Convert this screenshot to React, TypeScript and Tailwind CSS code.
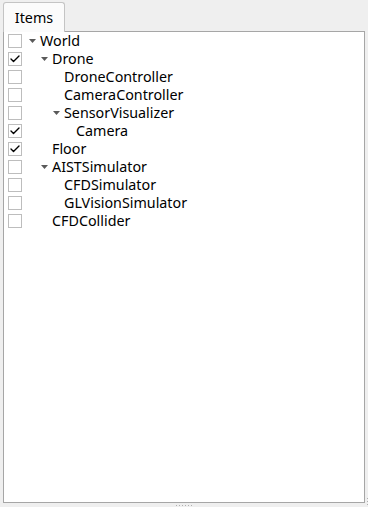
import { Check } from 'lucide-react';

type Item = { name: string; level: number; checked?: boolean; open?: boolean };

const items: Item[] = [
  { name: 'World', level: 0, open: true },
  { name: 'Drone', level: 1, checked: true, open: true },
  { name: 'DroneController', level: 2 },
  { name: 'CameraController', level: 2 },
  { name: 'SensorVisualizer', level: 2, open: true },
  { name: 'Camera', level: 3, checked: true },
  { name: 'Floor', level: 1, checked: true },
  { name: 'AISTSimulator', level: 1, open: true },
  { name: 'CFDSimulator', level: 2 },
  { name: 'GLVisionSimulator', level: 2 },
  { name: 'CFDCollider', level: 1 },
];

const pads = ['pl-[7px]', 'pl-[19px]', 'pl-[31px]', 'pl-[43px]'];

const Row = ({ item }: { item: Item }) => (
  <div className="flex items-center h-[18px]">
    <div className="ml-[4px] w-[14px] h-[14px] border border-[#bdbdbd] bg-white flex items-center justify-center">
      {item.checked && <Check className="w-[12px] h-[12px] text-black" strokeWidth={2.75} />}
    </div>
    <div className={`flex items-center ${pads[item.level]}`}>
      <div className="w-[11px] flex items-center">
        {item.open && (
          <svg width="7" height="4" viewBox="0 0 7 4">
            <path d="M0 0 H7 L3.5 4 Z" fill="#5a5a5a" />
          </svg>
        )}
      </div>
      <span className="text-[14.3px] text-black leading-none">{item.name}</span>
    </div>
  </div>
);

export default function App() {
  return (
    <div className="w-[368px] h-[507px] bg-[#efefef] relative font-['Noto_Sans',sans-serif] overflow-hidden">
      <div className="pl-[3px] pt-[2px] flex">
        <div className="w-[62px] h-[30px] bg-[#fbfbfb] border border-b-0 border-[#c4c4c4] rounded-t-[3px] flex items-center justify-center text-[14.3px] text-black relative z-10 -mb-[1px]">
          Items
        </div>
      </div>
      <div className="mx-[3px] h-[472px] bg-white border border-[#a6a6a6] w-[362px]">
        {items.map((it) => (
          <Row key={it.name + it.level} item={it} />
        ))}
      </div>
      {/* splitter handle */}
      <div className="flex justify-center gap-[2px] mt-[2px]">
        {[0, 1, 2, 3, 4, 5].map((i) => (
          <div key={i} className="w-[1px] h-[1px] bg-[#b0b0b0]" />
        ))}
      </div>
      {/* size grip */}
      <div className="absolute right-0 bottom-[2px] flex flex-col gap-[2px]">
        {[0, 1, 2].map((i) => (
          <div key={i} className="w-[1px] h-[1px] bg-[#b0b0b0]" />
        ))}
      </div>
    </div>
  );
}
